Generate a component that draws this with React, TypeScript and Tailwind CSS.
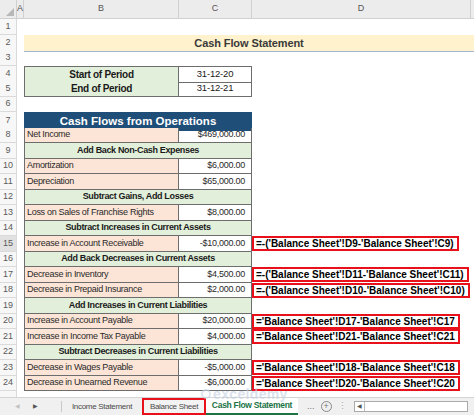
import React from "react"

type Row =
  | { kind: "empty" }
  | { kind: "title" }
  | { kind: "period"; label: string; value: string; first?: boolean }
  | { kind: "head"; label: string }
  | { kind: "section"; label: string }
  | { kind: "item"; label: string; value: string; formula?: string }

const rows: Row[] = [
  { kind: "empty" },
  { kind: "title" },
  { kind: "empty" },
  { kind: "period", label: "Start of Period", value: "31-12-20", first: true },
  { kind: "period", label: "End of Period", value: "31-12-21" },
  { kind: "empty" },
  { kind: "head", label: "Cash Flows from Operations" },
  { kind: "item", label: "Net Income", value: "$469,000.00" },
  { kind: "section", label: "Add Back Non-Cash Expenses" },
  { kind: "item", label: "Amortization", value: "$6,000.00" },
  { kind: "item", label: "Depreciation", value: "$65,000.00" },
  { kind: "section", label: "Subtract Gains, Add Losses" },
  { kind: "item", label: "Loss on Sales of Franchise Rights", value: "$8,000.00" },
  { kind: "section", label: "Subtract Increases in Current Assets" },
  { kind: "item", label: "Increase in Account Receivable", value: "-$10,000.00", formula: "=-('Balance Sheet'!D9-'Balance Sheet'!C9)" },
  { kind: "section", label: "Add Back Decreases in Current Assets" },
  { kind: "item", label: "Decrease in Inventory", value: "$4,500.00", formula: "=-('Balance Sheet'!D11-'Balance Sheet'!C11)" },
  { kind: "item", label: "Decrease in Prepaid Insurance", value: "$2,000.00", formula: "=-('Balance Sheet'!D10-'Balance Sheet'!C10)" },
  { kind: "section", label: "Add Increases in Current Liabilities" },
  { kind: "item", label: "Increase in Account Payable", value: "$20,000.00", formula: "='Balance Sheet'!D17-'Balance Sheet'!C17" },
  { kind: "item", label: "Increase in Income Tax Payable", value: "$4,000.00", formula: "='Balance Sheet'!D21-'Balance Sheet'!C21" },
  { kind: "section", label: "Subtract Decreases in Current Liabilities" },
  { kind: "item", label: "Decrease in Wages Payable", value: "-$5,000.00", formula: "='Balance Sheet'!D18-'Balance Sheet'!C18" },
  { kind: "item", label: "Decrease in Unearned Revenue", value: "-$6,000.00", formula: "='Balance Sheet'!D20-'Balance Sheet'!C20" },
]

const cols = "grid grid-cols-[17px_7px_155px_73px_1fr]"

function RowNum({ n, active }: { n: number; active?: boolean }) {
  return (
    <div
      className={`flex items-center justify-center border-r border-b border-[#dadada] text-[9px] text-[#5a5a5a] ${
        active ? "bg-[#e1e1e1]" : "bg-[#f7f7f7]"
      }`}
    >
      {n}
    </div>
  )
}

function SheetRow({ row, n }: { row: Row; n: number }) {
  const base = `${cols} h-[15.5px]`
  const cell = "flex items-center border-[#6d6d6d] whitespace-nowrap"

  if (row.kind === "empty") {
    return (
      <div className={base}>
        <RowNum n={n} />
      </div>
    )
  }

  if (row.kind === "title") {
    return (
      <div className={base}>
        <RowNum n={n} />
        <div />
        <div className="col-span-3 flex items-center justify-center bg-[#fff2cc] border-b-[1.5px] border-[#9fb6d3] text-[11px] font-bold text-[#3a3a3a] tracking-[-0.1px]">
          Cash Flow Statement
        </div>
      </div>
    )
  }

  if (row.kind === "period") {
    return (
      <div className={base}>
        <RowNum n={n} />
        <div />
        <div className={`${cell} justify-center bg-[#e2efda] border-l border-r border-b font-bold text-[10px] tracking-[-0.3px] ${row.first ? "border-t" : ""}`}>
          {row.label}
        </div>
        <div className={`${cell} justify-center border-r border-b text-[9.5px] tracking-[-0.2px] ${row.first ? "border-t" : ""}`}>{row.value}</div>
      </div>
    )
  }

  if (row.kind === "head") {
    return (
      <div className={base}>
        <RowNum n={n} />
        <div />
        <div className="col-span-2 flex items-center justify-center bg-[#1f4e78] text-white font-bold text-[11.5px] border border-[#1f4e78]">
          {row.label}
        </div>
      </div>
    )
  }

  if (row.kind === "section") {
    return (
      <div className={base}>
        <RowNum n={n} />
        <div />
        <div className={`${cell} col-span-2 justify-center bg-[#e2efda] border-l border-r border-b font-bold text-[9px] tracking-[-0.35px]`}>
          {row.label}
        </div>
      </div>
    )
  }

  return (
    <div className={base}>
      <RowNum n={n} active={n === 15} />
      <div />
      <div className={`${cell} bg-[#fce4d6] border-l border-r border-b pl-[2px] text-[9px] tracking-[-0.3px] text-[#2a2a2a]`}>{row.label}</div>
      <div className={`${cell} justify-end border-r border-b pr-[6px] text-[9px] tracking-[-0.25px] text-[#2a2a2a]`}>{row.value}</div>
      <div className="flex items-center">
        {row.formula && (
          <div className="h-[15px] flex items-center border-2 border-[#e8101a] pl-[2px] pr-[3px] font-bold text-[10px] text-black whitespace-nowrap">
            {row.formula}
          </div>
        )}
      </div>
    </div>
  )
}

export default function App() {
  return (
    <div className="relative w-[474px] h-[416px] overflow-hidden bg-white text-[#1a1a1a] flex flex-col" style={{ fontFamily: '"Liberation Sans", Arial, sans-serif' }}>
      {/* column headers */}
      <div className={`${cols} h-[19px] bg-[#ececec] text-[9px] text-[#555] border-b border-[#d0d0d0] shrink-0`}>
        <div className="relative border-r border-[#d0d0d0]">
          <div className="absolute right-[2px] bottom-[2px] w-0 h-0 border-l-[8px] border-l-transparent border-b-[8px] border-b-[#b8b8b8]" />
        </div>
        <div className="flex items-center justify-center border-r border-[#d0d0d0]">A</div>
        <div className="flex items-center justify-center border-r border-[#d0d0d0]">B</div>
        <div className="flex items-center justify-center border-r border-[#d0d0d0]">C</div>
        <div className="flex items-center justify-center mr-[3px] border-r border-[#d0d0d0]">D</div>
      </div>

      {rows.map((row, i) => (
        <SheetRow key={i} row={row} n={i + 1} />
      ))}

      <div className={`${cols} h-[6px] shrink-0`}>
        <div className="bg-[#f7f7f7] border-r border-[#dadada]" />
      </div>

      {/* watermark */}
      <div className="absolute left-[201px] top-[387px] flex items-center gap-[2px] text-[#c4d0e2] opacity-60 pointer-events-none">
        <div className="w-[10px] h-[10px] rounded-full border-2 border-[#cdd7e6]" />
        <span className="text-[14px] font-bold tracking-wide leading-none">exceldemy</span>
      </div>

      {/* sheet tabs */}
      <div className="flex items-stretch h-[18px] bg-[#f0f0f0] border-t border-[#d4d4d4] text-[8px] tracking-[-0.3px] text-[#4a4a4a] shrink-0 whitespace-nowrap">
        <div className="w-[61px] flex items-center gap-[13px] pl-[15px] text-[6px]">
          <span className="text-[#c2c2c2]">◀</span>
          <span className="text-[#555]">▶</span>
        </div>
        <div className="w-px my-[3px] bg-[#c8c8c8]" />
        <div className="w-[80px] flex items-center justify-center">Income Statement</div>
        <div className="w-[64px] flex items-center justify-center border-2 border-[#e8101a] bg-[#f3f3f3]">Balance Sheet</div>
        <div className="w-[92px] flex items-center justify-center bg-white font-bold text-[8.5px] text-[#217346] border-b-2 border-[#217346]">
          Cash Flow Statement
        </div>
        <div className="w-[9px]" />
        <div className="flex items-center text-[#777] text-[9px] tracking-normal">...</div>
        <div className="ml-[6px] flex items-center">
          <div className="w-[11px] h-[11px] rounded-full border border-[#888] flex items-center justify-center text-[9px] leading-none text-[#777]">+</div>
        </div>
        <div className="ml-[6px] flex items-center text-[#aaa] text-[9px]">⋮</div>
        <div className="ml-[8px] my-[3px] w-[114px] bg-white border border-[#aaa] flex items-center pl-[2px]">
          <span className="text-[6px] text-[#555]">◀</span>
          <div className="ml-[2px] w-px h-full bg-[#bbb]" />
        </div>
      </div>
    </div>
  )
}
